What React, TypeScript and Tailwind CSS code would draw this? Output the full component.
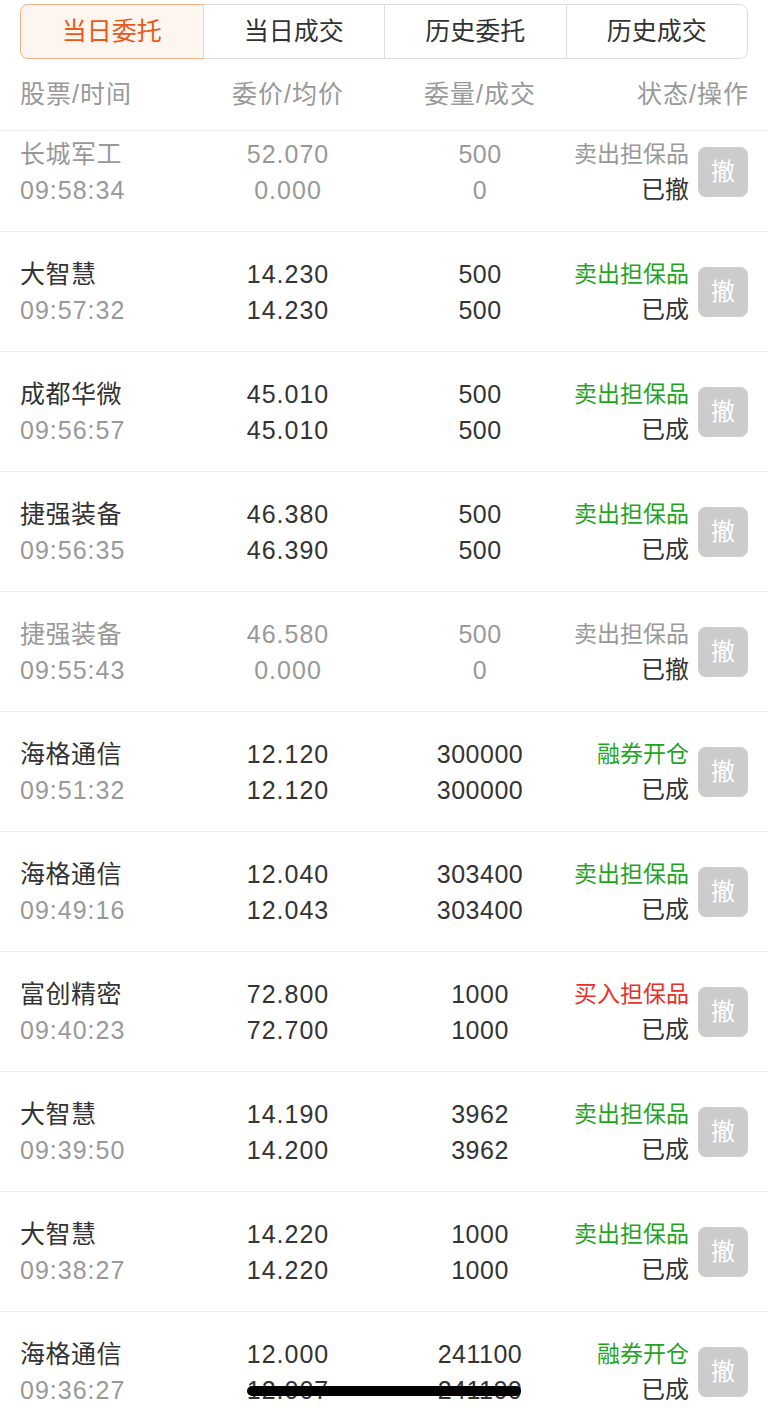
import { useState } from 'react';

type Order = {
  name: string;
  time: string;
  price: string;
  avg: string;
  qty: string;
  filled: string;
  side: string;
  status: string;
  cancelled?: boolean;
};

const orders: Order[] = [
  { name: '长城军工', time: '09:58:34', price: '52.070', avg: '0.000', qty: '500', filled: '0', side: '卖出担保品', status: '已撤', cancelled: true },
  { name: '大智慧', time: '09:57:32', price: '14.230', avg: '14.230', qty: '500', filled: '500', side: '卖出担保品', status: '已成' },
  { name: '成都华微', time: '09:56:57', price: '45.010', avg: '45.010', qty: '500', filled: '500', side: '卖出担保品', status: '已成' },
  { name: '捷强装备', time: '09:56:35', price: '46.380', avg: '46.390', qty: '500', filled: '500', side: '卖出担保品', status: '已成' },
  { name: '捷强装备', time: '09:55:43', price: '46.580', avg: '0.000', qty: '500', filled: '0', side: '卖出担保品', status: '已撤', cancelled: true },
  { name: '海格通信', time: '09:51:32', price: '12.120', avg: '12.120', qty: '300000', filled: '300000', side: '融券开仓', status: '已成' },
  { name: '海格通信', time: '09:49:16', price: '12.040', avg: '12.043', qty: '303400', filled: '303400', side: '卖出担保品', status: '已成' },
  { name: '富创精密', time: '09:40:23', price: '72.800', avg: '72.700', qty: '1000', filled: '1000', side: '买入担保品', status: '已成' },
  { name: '大智慧', time: '09:39:50', price: '14.190', avg: '14.200', qty: '3962', filled: '3962', side: '卖出担保品', status: '已成' },
  { name: '大智慧', time: '09:38:27', price: '14.220', avg: '14.220', qty: '1000', filled: '1000', side: '卖出担保品', status: '已成' },
  { name: '海格通信', time: '09:36:27', price: '12.000', avg: '12.007', qty: '241100', filled: '241100', side: '融券开仓', status: '已成' },
];

const tabs = ['当日委托', '当日成交', '历史委托', '历史成交'];

function sideColor(o: Order) {
  if (o.cancelled) return 'text-[#999999]';
  if (o.side === '买入担保品') return 'text-[#e8302a]';
  return 'text-[#1fa51f]';
}

export default function App() {
  const [active, setActive] = useState(0);

  return (
    <div
      className="relative h-[1412px] overflow-hidden bg-white flex flex-col"
      style={{ fontFamily: '"Liberation Sans", "Noto Sans CJK SC", sans-serif' }}
    >
      {/* Tabs */}
      <div className="px-[20px] pt-[4px]">
        <div className="grid grid-cols-4 h-[55px] rounded-[8px] border border-[#dddddd]">
          {tabs.map((t, i) => (
            <button
              key={t}
              onClick={() => setActive(i)}
              className={
                i === active
                  ? '-m-px flex items-center justify-center rounded-l-[8px] border border-[#f2b089] bg-[#fdf5ef] text-[25px] text-[#e85a1b]'
                  : 'flex items-center justify-center border-l border-[#dddddd] text-[25px] text-[#333333] first:border-l-0'
              }
            >
              {t}
            </button>
          ))}
        </div>
      </div>

      {/* Header */}
      <div className="flex h-[72px] items-center border-b border-[#eeeeee] px-[20px] text-[25px] tracking-[1px] text-[#999999] whitespace-nowrap">
        <div className="w-[176px]">股票/时间</div>
        <div className="w-[184px] text-center">委价/均价</div>
        <div className="w-[192px] pl-[8px] text-center">委量/成交</div>
        <div className="flex-1 text-right -mr-[1px]">状态/操作</div>
      </div>

      {/* List */}
      <div className="flex-1 overflow-hidden">
        <div className="-mt-[19px]">
          {orders.map((o, i) => {
            const main = o.cancelled ? 'text-[#999999]' : 'text-[#333333]';
            return (
              <div
                key={i}
                className="flex h-[120px] items-center border-b border-[#eeeeee] px-[20px] text-[25px] leading-[36px] whitespace-nowrap"
              >
                <div className="w-[176px]">
                  <div className={`tracking-[0.5px] ${main}`}>{o.name}</div>
                  <div className="tracking-[1px] text-[#999999]">{o.time}</div>
                </div>
                <div className={`w-[184px] text-center tracking-[1px] ${main}`}>
                  <div>{o.price}</div>
                  <div>{o.avg}</div>
                </div>
                <div className={`w-[192px] pl-[8px] text-center tracking-[0.5px] ${main}`}>
                  <div>{o.qty}</div>
                  <div>{o.filled}</div>
                </div>
                <div className="flex-1 text-right">
                  <div className={`text-[23px] ${sideColor(o)}`}>{o.side}</div>
                  <div className="text-[24px] text-[#333333]">{o.status}</div>
                </div>
                <button className="ml-[9px] flex h-[50px] w-[50px] shrink-0 items-center justify-center rounded-[8px] bg-[#cccccc] text-[24px] text-white">
                  撤
                </button>
              </div>
            );
          })}
        </div>
      </div>

      {/* Home indicator */}
      <div className="absolute bottom-[16px] left-1/2 h-[10px] w-[274px] -translate-x-1/2 rounded-full bg-black" />
    </div>
  );
}
